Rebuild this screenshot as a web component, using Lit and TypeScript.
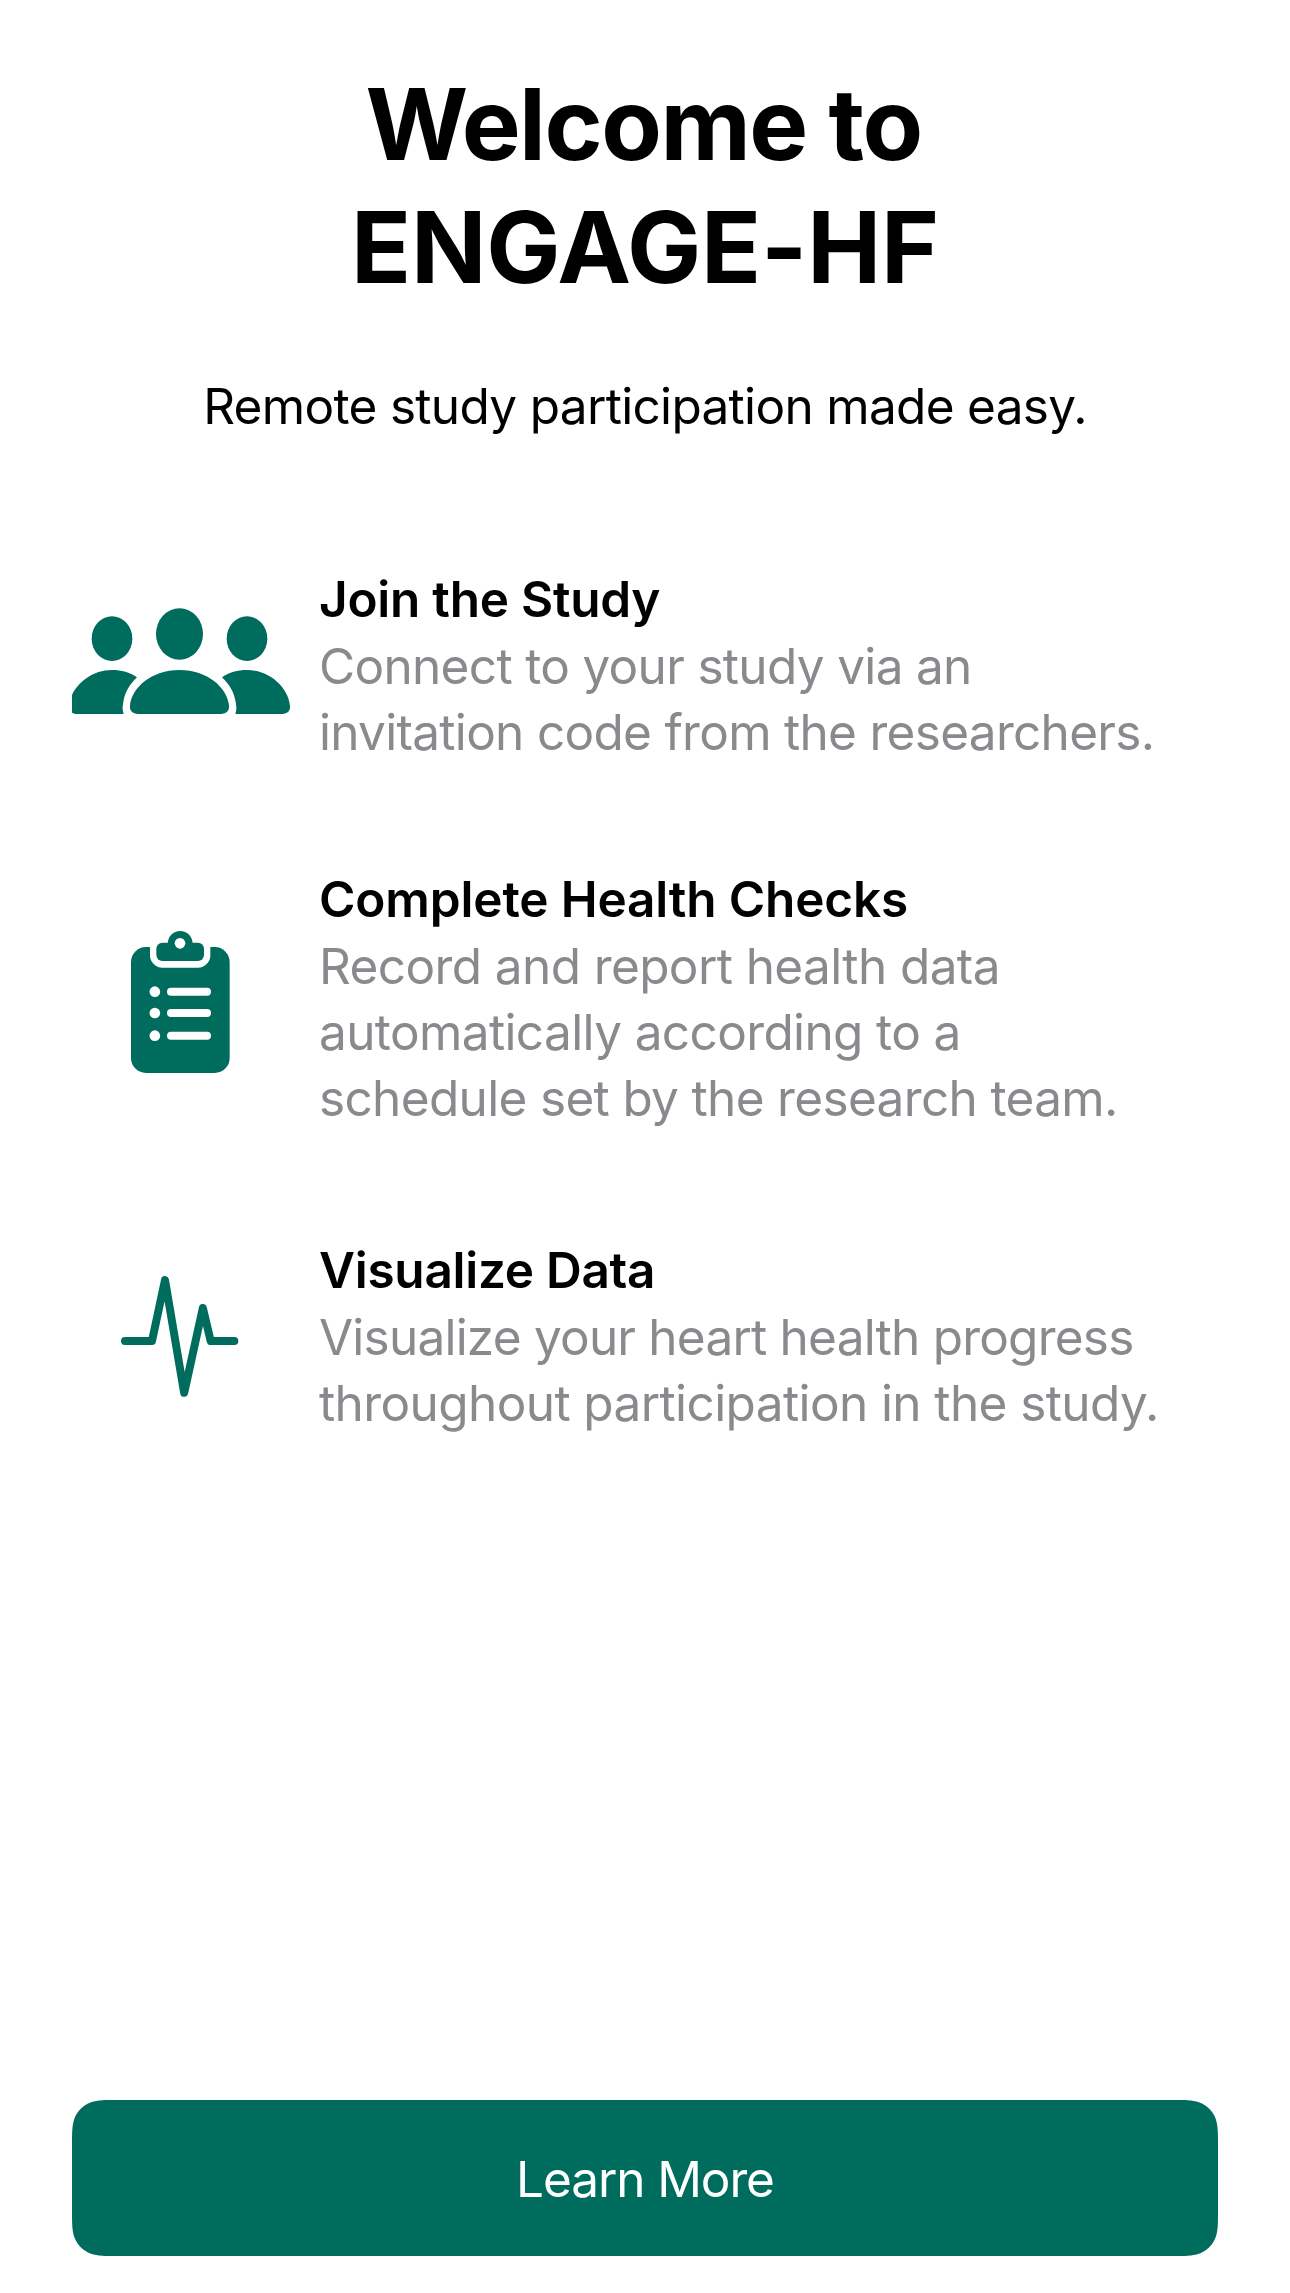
import { LitElement, html, svg, css, unsafeCSS, type SVGTemplateResult } from "lit";
import { customElement, property } from "lit/decorators.js";
import { styleMap } from "lit/directives/style-map.js";

/** A line of text with its tracking in px. */
type Line = [text: string, tracking: number];

interface Feature {
  icon: SVGTemplateResult;
  viewBox: string;
  title: Line;
  lines: Line[];
}

/** Outline of a rectangle with continuous-curvature corners. */
function smoothRect(w: number, h: number, r: number): string {
  const k = [1.528665, 1.088493, 0.868407, 0.631494, 0.074911, 0.372824, 0.16906].map((n) => n * r);
  const [a, b, c, d, e, f, g] = k;
  const X = (n: number) => w - n;
  const Y = (n: number) => h - n;
  return [
    `M${a} 0H${X(a)}`,
    `C${X(b)} 0 ${X(c)} 0 ${X(d)} ${e}C${X(f)} ${g} ${X(g)} ${f} ${X(e)} ${d}C${w} ${c} ${w} ${b} ${w} ${a}`,
    `V${Y(a)}`,
    `C${w} ${Y(b)} ${w} ${Y(c)} ${X(e)} ${Y(d)}C${X(g)} ${Y(f)} ${X(f)} ${Y(g)} ${X(d)} ${Y(e)}C${X(c)} ${h} ${X(b)} ${h} ${X(a)} ${h}`,
    `H${a}`,
    `C${b} ${h} ${c} ${h} ${d} ${Y(e)}C${f} ${Y(g)} ${g} ${Y(f)} ${e} ${Y(d)}C0 ${Y(c)} 0 ${Y(b)} 0 ${Y(a)}`,
    `V${a}`,
    `C0 ${b} 0 ${c} ${e} ${d}C${g} ${f} ${f} ${g} ${d} ${e}C${c} 0 ${b} 0 ${a} 0Z`,
  ].join("");
}

const line = ([text, tracking]: Line, cls = "line") =>
  html`<span class=${cls} style=${styleMap({ letterSpacing: `${tracking}px` })}>${text}</span>`;

const people = svg`
  <g fill="currentColor">
    <ellipse cx="156" cy="146" rx="61" ry="67"/>
    <ellipse cx="561" cy="146" rx="61" ry="67"/>
    <ellipse cx="358.5" cy="132" rx="70.5" ry="77"/>
    <path d="M486 262C508 247 532 240 561 240C635 240 687 300 690 348C691 364 682 372 664 372H526C530 362 530 350 527 336C522 306 508 283 486 262Z"/>
    <path d="M231 262C209 247 185 240 156 240C82 240 30 300 27 348C26 364 35 372 53 372H191C187 362 187 350 190 336C195 306 209 283 231 262Z"/>
    <path d="M235 372C217 372 208 362 210 346C216 293 274 240 358.5 240C443 240 501 293 507 346C509 362 500 372 482 372Z"/>
  </g>`;

const clipboard = svg`
  <rect x="63" y="111" width="296" height="378" rx="45" fill="currentColor"/>
  <path d="M120 100V136A37 37 0 0 0 157 173H264A37 37 0 0 0 301 136V100Z" fill="#fff"/>
  <g fill="currentColor">
    <rect x="139" y="98" width="143" height="55" rx="18"/>
    <circle cx="210.5" cy="100" r="37"/>
  </g>
  <g fill="#fff">
    <circle cx="210" cy="100" r="16"/>
    ${[245, 309, 377].map(
      (y) => svg`<circle cx="134.5" cy=${y} r="16"/><rect x="171" y=${y - 12} width="132" height="24" rx="12"/>`
    )}
  </g>`;

const pulse = svg`
  <path d="M45 243H126L165 60.5L222.5 398.5L278.5 144L302 243H373" fill="none" stroke="currentColor"
    stroke-width="24" stroke-linecap="round" stroke-linejoin="round"/>`;

const FEATURES: Feature[] = [
  {
    icon: people,
    viewBox: "36 -72 654 597",
    title: ["Join the Study", -0.24],
    lines: [["Connect to your study via an", -0.68], ["invitation code from the researchers.", -0.7]],
  },
  {
    icon: clipboard,
    viewBox: "-114 -132 654 795",
    title: ["Complete Health Checks", -0.15],
    lines: [
      ["Record and report health data", -0.6],
      ["automatically according to a", -0.62],
      ["schedule set by the research team.", -0.66],
    ],
  },
  {
    icon: pulse,
    viewBox: "-114 -69 654 597",
    title: ["Visualize Data", -0.27],
    lines: [["Visualize your heart health progress", -0.78], ["throughout participation in the study.", -0.6]],
  },
];

@customElement("feature-row")
class FeatureRow extends LitElement {
  @property({ attribute: false }) feature!: Feature;

  static styles = css`
    :host {
      display: grid;
      grid-template-columns: 218px 1fr;
      column-gap: 29px;
    }
    .icon {
      display: block;
      width: 100%;
      height: 100%;
      color: #006c5d;
    }
    .text {
      min-width: 0;
      line-height: 66px;
      color: #8a8a8e;
    }
    .title {
      display: block;
      line-height: 67px;
      font-weight: 600;
      color: #000;
      white-space: nowrap;
    }
    .line {
      display: block;
      white-space: nowrap;
    }
  `;

  render() {
    const f = this.feature;
    return html`
      <svg class="icon" viewBox=${f.viewBox} aria-hidden="true">${f.icon}</svg>
      <div class="text">${line(f.title, "title")}${f.lines.map((l) => line(l))}</div>
    `;
  }
}

@customElement("app-root")
class AppRoot extends LitElement {
  static styles = css`
    :host {
      display: flex;
      flex-direction: column;
      box-sizing: border-box;
      height: 2293px;
      padding: 63px 72px 37px;
      background: #fff;
      color: #000;
      font-family: Inter, "Liberation Sans", sans-serif;
      font-size: 49.5px;
    }
    h1 {
      margin: 0;
      font-size: 99px;
      font-weight: 700;
      line-height: 123px;
      text-align: center;
    }
    .line {
      display: block;
      white-space: nowrap;
    }
    .lead {
      display: block;
      padding-right: 3px;
      white-space: nowrap;
    }
    .subtitle {
      margin: 64px 0 0;
      line-height: 66px;
      text-align: center;
    }
    .features {
      display: flex;
      flex-direction: column;
      margin-top: 127px;
    }
    .second {
      margin-top: 101px;
    }
    .third {
      margin-top: 106px;
    }
    .action {
      display: flex;
      align-items: center;
      justify-content: center;
      box-sizing: border-box;
      width: 1146px;
      height: 156px;
      margin: auto 0 0;
      padding: 2px 0 0;
      border: 0;
      background: #006c5d;
      color: #fff;
      font: inherit;
      clip-path: path("${unsafeCSS(smoothRect(1146, 156, 30))}");
    }
  `;

  render() {
    return html`
      <h1>${line(["Welcome to", -1.51], "lead")}${line(["ENGAGE-HF", -0.16])}</h1>
      <p class="subtitle">${line(["Remote study participation made easy.", -0.68])}</p>
      <div class="features">
        <feature-row .feature=${FEATURES[0]}></feature-row>
        <feature-row class="second" .feature=${FEATURES[1]}></feature-row>
        <feature-row class="third" .feature=${FEATURES[2]}></feature-row>
      </div>
      <button class="action">${line(["Learn More", -1.1])}</button>
    `;
  }
}
